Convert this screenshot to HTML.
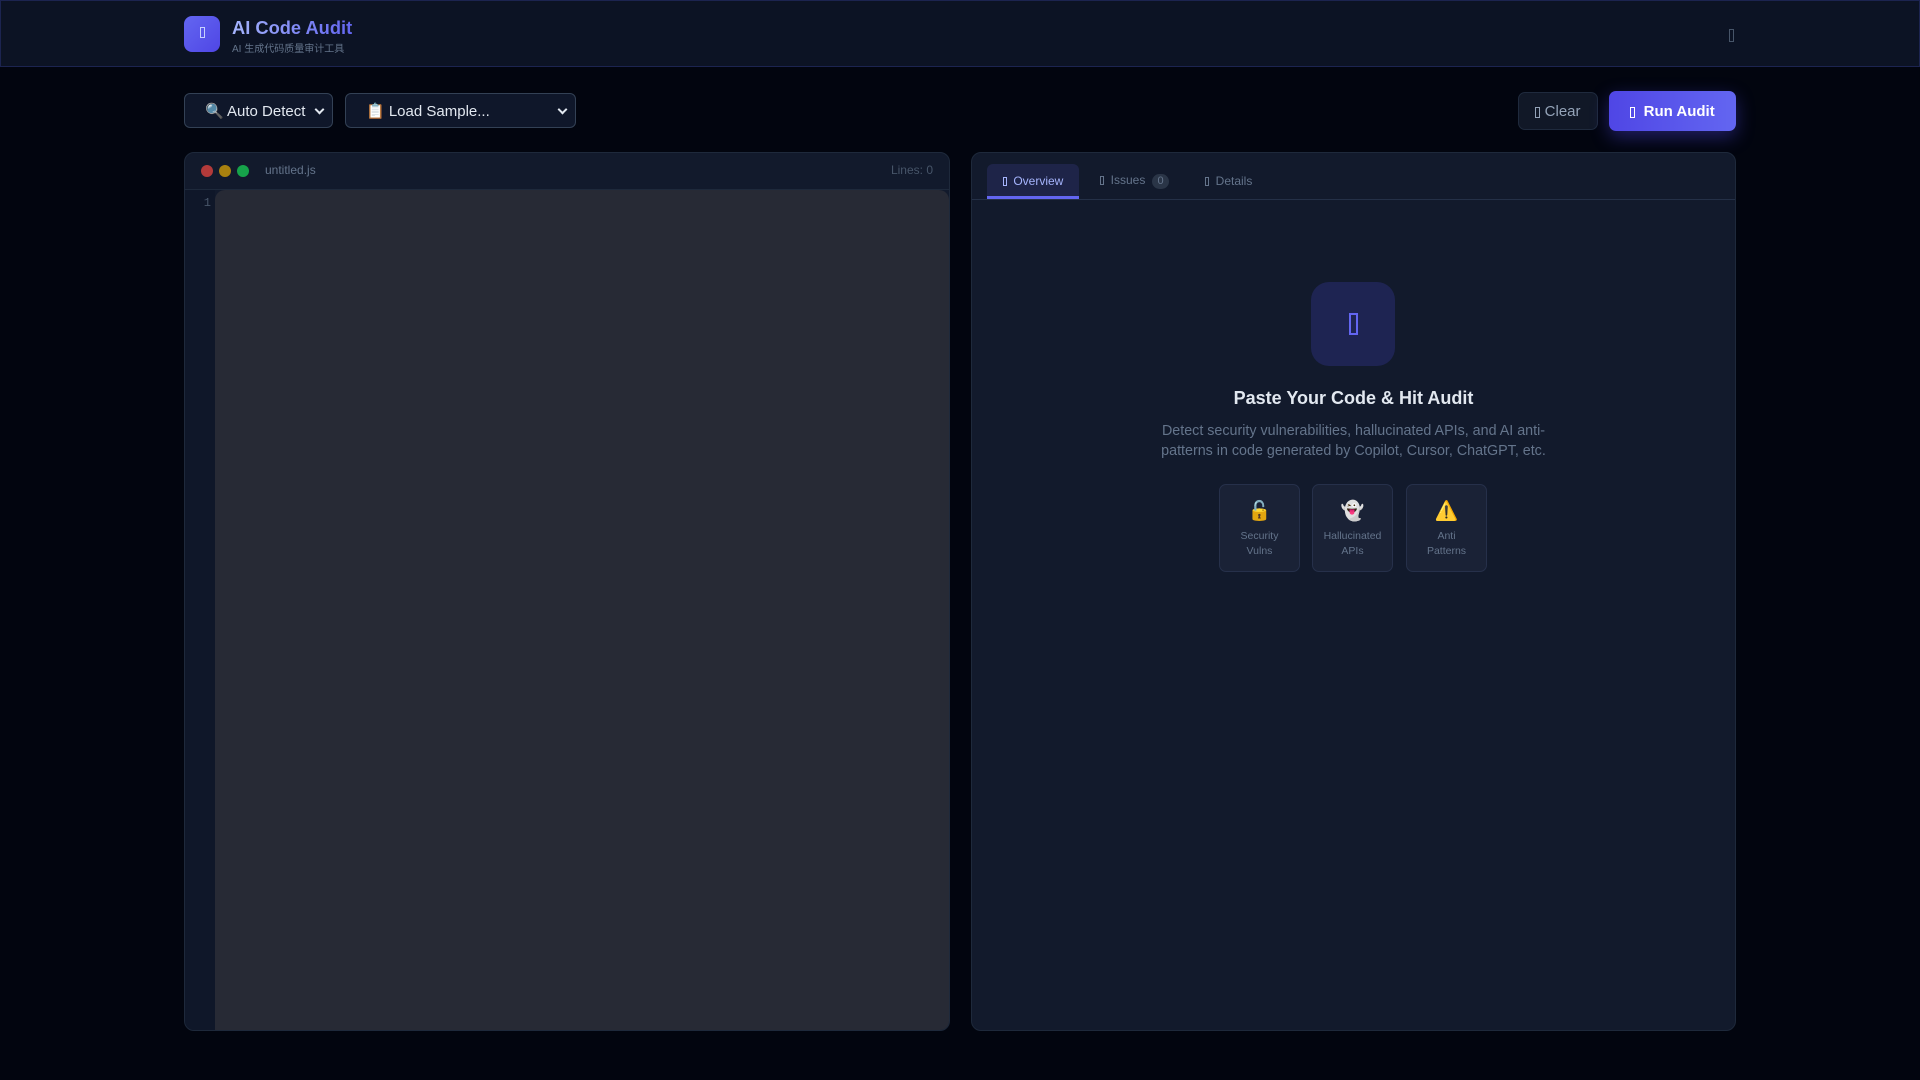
<!DOCTYPE html>
<html><head><meta charset="utf-8"><style>
*{box-sizing:border-box;margin:0;padding:0}
body{width:1920px;height:1080px;background:#02050f;font-family:"Liberation Sans","Noto Sans CJK SC",sans-serif;position:relative;overflow:hidden;color:#cbd5e1}
.tofu{display:inline-block;width:5px;height:11px;border:1px solid currentColor;vertical-align:middle}
.hdr{position:absolute;left:0;top:0;width:1920px;height:67px;background:#0c1324;border:1px solid #1c2450}
.logo{position:absolute;left:184px;top:16px;width:36px;height:36px;border-radius:8px;background:linear-gradient(135deg,#6366f1,#4f46e5);color:#c7d2fe;text-align:center;line-height:34px}
.t1{position:absolute;left:232px;top:17px;font-size:18.3px;font-weight:bold;background:linear-gradient(90deg,#a5b4fc,#6366f1);-webkit-background-clip:text;color:transparent}
.t2{position:absolute;left:232px;top:40px;font-size:10px;color:#64748b}
.sel{position:absolute;top:93px;height:35px;border:1px solid #334155;border-radius:6px;background:#0f172a;color:#e2e8f0;font-size:15px;line-height:35px;padding-left:20px}
.sel:after{content:"";position:absolute;right:9px;top:12px;width:5px;height:5px;border-right:2px solid #e2e8f0;border-bottom:2px solid #e2e8f0;transform:rotate(45deg)}
.btn{position:absolute;border-radius:7px;font-size:15px;text-align:center}
.panel{position:absolute;top:152px;height:879px;border:1px solid #1e293b;border-radius:10px;background:#121a2c;overflow:hidden}
.card{position:absolute;top:484px;width:81px;height:88px;border:1px solid #26304a;border-radius:7px;background:#1a2236;text-align:center;font-size:10.5px;color:#64748b;line-height:15px;padding-top:16px}
.card .e{font-size:19px;line-height:22px;margin-bottom:6px;color:#facc15}
</style></head><body>
<div class="hdr"></div>
<div class="logo"><span class="tofu"></span></div>
<div class="t1">AI Code Audit</div>
<div class="t2">AI 生成代码质量审计工具</div>
<div style="position:absolute;left:1729px;top:27px;color:#475569"><span class="tofu" style="height:13px"></span></div>

<div class="sel" style="left:184px;width:149px">🔍 Auto Detect</div>
<div class="sel" style="left:345px;width:231px">📋 Load Sample...</div>
<div class="btn" style="left:1518px;top:92px;width:80px;height:38px;background:#111827;border:1px solid #1f2a3d;color:#94a3b8;line-height:38px"><span class="tofu"></span> Clear</div>
<div class="btn" style="left:1609px;top:91px;width:127px;height:40px;background:linear-gradient(90deg,#4f46e5,#6366f1);color:#fff;font-weight:bold;line-height:42px;box-shadow:0 6px 18px rgba(79,70,229,.4)"><span class="tofu"></span>&nbsp; Run Audit</div>

<div class="panel" style="left:184px;width:766px">
 <div style="height:37px;border-bottom:1px solid #1e293b;position:relative">
  <span style="position:absolute;left:16px;top:12px;width:12px;height:12px;border-radius:50%;background:#b33a3a"></span>
  <span style="position:absolute;left:34px;top:12px;width:12px;height:12px;border-radius:50%;background:#a8810f"></span>
  <span style="position:absolute;left:52px;top:12px;width:12px;height:12px;border-radius:50%;background:#16a34a"></span>
  <span style="position:absolute;left:80px;top:10px;font-size:12px;color:#64748b">untitled.js</span>
  <span style="position:absolute;right:16px;top:10px;font-size:12px;color:#475569">Lines: 0</span>
 </div>
 <div style="position:absolute;left:0;top:37px;width:30px;bottom:0;background:#0f1729;color:#475569;font-size:12px;text-align:right;padding:6px 4px 0 0;font-family:'Liberation Mono',monospace">1</div>
 <div style="position:absolute;left:30px;top:37px;right:0;bottom:0;background:#272a35;border-radius:10px 10px 0 0"></div>
</div>

<div class="panel" style="left:971px;width:765px">
 <div style="height:47px;border-bottom:1px solid #243047;position:relative;font-size:12px">
  <div style="position:absolute;left:15px;top:11px;width:92px;height:35px;background:#1e2448;border-radius:6px 6px 0 0;border-bottom:3px solid #6366f1;color:#a5b4fc;text-align:center;line-height:34px"><span class="tofu" style="height:9px;width:4px"></span>&nbsp; Overview</div>
  <div style="position:absolute;left:128px;top:10px;line-height:34px;color:#64748b"><span class="tofu" style="height:9px;width:4px"></span>&nbsp; Issues&nbsp; <span style="display:inline-block;background:#2a3547;border-radius:8px;width:17px;height:15px;line-height:15px;text-align:center;font-size:11px">0</span></div>
  <div style="position:absolute;left:233px;top:11px;line-height:34px;color:#64748b"><span class="tofu" style="height:9px;width:4px"></span>&nbsp; Details</div>
 </div>
</div>
<div style="position:absolute;left:1311px;top:282px;width:84px;height:84px;border-radius:18px;background:#1e2452;color:#6366f1;text-align:center;line-height:84px"><span class="tofu" style="width:9px;height:22px;border-width:2px"></span></div>
<div style="position:absolute;left:971px;width:765px;top:388px;text-align:center;font-size:18px;font-weight:bold;color:#e2e8f0">Paste Your Code &amp; Hit Audit</div>
<div style="position:absolute;left:1156px;width:395px;top:421px;text-align:center;font-size:14.3px;line-height:20px;color:#64748b">Detect security vulnerabilities, hallucinated APIs, and AI anti-patterns in code generated by Copilot, Cursor, ChatGPT, etc.</div>
<div class="card" style="left:1219px"><div class="e">🔓</div>Security<br>Vulns</div>
<div class="card" style="left:1312px"><div class="e">👻</div>Hallucinated<br>APIs</div>
<div class="card" style="left:1406px"><div class="e">⚠️</div>Anti<br>Patterns</div>
</body></html>
